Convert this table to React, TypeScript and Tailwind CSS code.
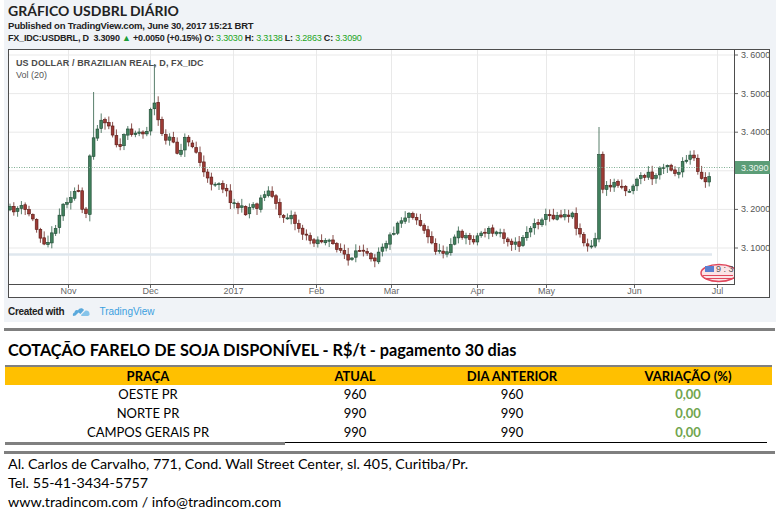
import React from 'react';

const TV = "font-['Liberation_Sans',Arial,sans-serif]";
const XL = "font-['Lato','Open_Sans',sans-serif]";

// rough path of the close, in page pixels (x, y)
const anchors: [number, number][] = [
  [10, 208], [22, 206], [30, 212], [38, 230], [45, 240], [50, 238], [56, 222], [62, 205],
  [68, 196], [74, 190], [78, 190], [82, 208], [87, 216], [90.5, 138], [96, 128], [100, 118],
  [106, 118], [112, 128], [117, 148], [122, 140], [128, 128], [134, 130], [140, 130], [146, 134],
  [149, 108], [154, 100], [158, 118], [162, 130], [166, 140], [170, 135], [176, 150], [180, 148],
  [186, 135], [190, 140], [196, 150], [202, 165], [206, 178], [212, 180], [220, 180], [226, 190],
  [232, 200], [240, 206], [246, 210], [252, 202], [258, 205], [263, 190], [268, 190], [273, 195],
  [278, 210], [284, 215], [290, 212], [296, 222], [302, 230], [308, 238], [314, 238], [320, 238],
  [326, 240], [332, 242], [338, 245], [344, 252], [350, 262], [356, 252], [362, 244], [368, 250],
  [374, 258], [380, 245], [386, 240], [392, 232], [398, 220], [404, 215], [410, 210], [416, 216],
  [422, 225], [428, 236], [434, 245], [440, 252], [446, 248], [452, 240], [458, 232], [464, 233],
  [470, 238], [476, 236], [482, 230], [488, 228], [494, 232], [500, 230], [506, 236], [512, 240],
  [518, 245], [524, 232], [530, 226], [536, 222], [542, 215], [548, 215], [554, 214], [560, 212],
  [566, 212], [572, 212], [578, 228], [584, 240], [589, 248], [595.6, 238], [598, 142], [602, 185],
  [606, 187], [612, 182], [618, 180], [624, 186], [630, 190], [636, 176], [642, 175], [648, 172],
  [654, 178], [660, 165], [666, 160], [672, 168], [678, 172], [684, 160], [690, 155], [695, 158],
  [699, 178], [704, 178], [708, 180], [712, 166],
];

function interp(x: number) {
  for (let i = 1; i < anchors.length; i++) {
    const [x1, y1] = anchors[i];
    const [x0, y0] = anchors[i - 1];
    if (x <= x1) return y0 + ((x - x0) / (x1 - x0)) * (y1 - y0);
  }
  return anchors[anchors.length - 1][1];
}

type Candle = { x: number; o: number; c: number; h: number; l: number };

// long wicks seen in the picture, keyed by bar index
const spikes: Record<number, number> = { 22: 90, 38: 62, 155: 125 };

function buildCandles(): Candle[] {
  let seed = 11;
  const rnd = () => {
    seed = (seed * 16807) % 2147483647;
    return seed / 2147483647;
  };
  const out: Candle[] = [];
  let prev = interp(10);
  for (let i = 0; 10 + i * 3.8 <= 712.5; i++) {
    const x = 10 + i * 3.8;
    const c = interp(x) + (rnd() - 0.5) * 7;
    const o = prev + (rnd() - 0.5) * 2;
    let h = Math.min(o, c) - rnd() * 6 - 1;
    const l = Math.max(o, c) + rnd() * 6 + 1;
    if (spikes[i]) h = spikes[i];
    out.push({ x, o, c, h, l });
    prev = c;
  }
  return out;
}

const priceY = (p: number) => 53 + (3.6 - p) * 386;

const months: [string, number][] = [
  ['Nov', 68], ['Dec', 150], ['2017', 233], ['Feb', 316], ['Mar', 391],
  ['Apr', 477], ['May', 546], ['Jun', 634], ['Jul', 717],
];

function Chart() {
  const candles = buildCandles();
  const levels = [3.6, 3.5, 3.4, 3.3, 3.2, 3.1];
  return (
    <svg width={762} height={249} viewBox="8 47 762 249" className="block">
      <rect x={8.5} y={47.5} width={761} height={248} fill="#fff" stroke="#4d4d4d" />
      {levels.map((p) => (
        <line key={p} x1={9} x2={734} y1={priceY(p)} y2={priceY(p)} stroke="#e9e9e9" />
      ))}
      {months.map(([m, x]) => (
        <line key={m} x1={x + 0.5} x2={x + 0.5} y1={48} y2={282} stroke="#e9e9e9" />
      ))}
      <line x1={9} x2={712} y1={252.5} y2={252.5} stroke="#dfe7ee" strokeWidth={2.5} />

      {candles.map((k, i) => {
        const up = k.c < k.o;
        const top = Math.min(k.o, k.c);
        const hgt = Math.max(Math.abs(k.o - k.c), 1);
        return (
          <g key={i}>
            <line x1={k.x} x2={k.x} y1={k.h} y2={k.l} stroke={up ? '#2d5d45' : '#6b2420'} strokeWidth={0.8} />
            <rect
              x={k.x - 1.4}
              y={top}
              width={2.8}
              height={hgt}
              fill={up ? '#41805d' : '#9c3a35'}
              stroke={up ? '#1d4631' : '#561712'}
              strokeWidth={0.6}
            />
          </g>
        );
      })}

      <line x1={9} x2={734} y1={165.5} y2={165.5} stroke="#7fae92" strokeDasharray="1 1.5" />

      <line x1={734.5} x2={734.5} y1={48} y2={282} stroke="#4d4d4d" />
      <line x1={9} x2={735} y1={282.5} y2={282.5} stroke="#4d4d4d" />

      {levels.filter((p) => p !== 3.3).map((p) => (
        <g key={p}>
          <line x1={735} x2={738} y1={priceY(p)} y2={priceY(p)} stroke="#666" />
          <text x={741} y={priceY(p) + 3} fontSize={9} fill="#555" className={TV}>
            {p.toFixed(4).replace('.', '.\u2009')}
          </text>
        </g>
      ))}
      <rect x={735} y={159} width={35} height={13} fill="#5c9d77" />
      <text x={741} y={168.5} fontSize={9} fill="#eaf5ee" className={TV}>
        3.3090
      </text>

      {months.map(([m, x]) => (
        <g key={m}>
          <line x1={x + 0.5} x2={x + 0.5} y1={283} y2={286} stroke="#666" />
          <text x={x + 0.5} y={292} fontSize={9} fill="#666" textAnchor="middle" className={TV}>
            {m}
          </text>
        </g>
      ))}

      <text x={16} y={64} fontSize={9} fontWeight={700} fill="#4a4a4a" className={TV} letterSpacing={0.1}>
        US DOLLAR / BRAZILIAN REAL, D, FX_IDC
      </text>
      <text x={16} y={76} fontSize={9} fill="#555" className={TV}>
        Vol (20)
      </text>

      <g>
        <ellipse cx={719} cy={271} rx={18} ry={8.5} fill="#fbe3e6" stroke="#e0485d" strokeWidth={1.5} />
        <rect x={705} y={264} width={9} height={6} fill="#5b7fd0" />
        <path d="M703 273.5 h30 M704 276.5 h30" stroke="#e0485d" strokeWidth={1.2} />
        <text x={716} y={270} fontSize={9} fill="#555" className={TV}>
          9 : 3
        </text>
        <rect x={735} y={258} width={30} height={24} fill="#fff" />
        <line x1={734.5} x2={734.5} y1={258} y2={282} stroke="#4d4d4d" />
      </g>
    </svg>
  );
}

function TvLogo() {
  return (
    <svg width={19} height={11} viewBox="0 0 18 11" className="block">
      <path
        d="M1 10 C0 10 0 7 2 6.5 C2 4.5 4 3.5 5.5 4.5 C6.5 2 10 1.5 11.5 4 L8 8 L6 6.5 L3 9.5 Z"
        fill="#5aa9dc"
      />
      <path d="M8.5 9 L12.5 5 C14 4 17 5 17 7.5 C17.5 9 16.5 10 15 10 L9 10 Z" fill="#86c4ea" />
    </svg>
  );
}

const rows = [
  ['OESTE PR', '960', '960', '0,00'],
  ['NORTE PR', '990', '990', '0,00'],
  ['CAMPOS GERAIS PR', '990', '990', '0,00'],
];

const cols = 'grid grid-cols-[286px_128px_186px_166px]';

export default function App() {
  return (
    <div className="w-[780px] h-[517px] bg-white overflow-hidden text-[#1a1a1a]">
      <div className="ml-[4px] w-[772px] h-[322px] bg-[#f0f3f7] flex flex-col">
        <div className={`${XL} pl-[4px] pt-[2px] font-bold text-[14px] leading-[18px] text-[#222]`}>
          GRÁFICO USDBRL DIÁRIO
        </div>
        <div className={`${TV} pl-[4px] font-bold text-[9.5px] leading-[12px] text-[#222] tracking-[-0.2px]`}>
          Published on TradingView.com, June 30, 2017 15:21 BRT
        </div>
        <div className={`${TV} pl-[4px] font-bold text-[9px] leading-[12px] text-[#222] tracking-[-0.2px] whitespace-pre`}>
          FX_IDC:USDBRL, D  3.3090 <span className="text-[#1e9e3a]">▲</span> +0.0050 (+0.15%) O:
          <span className="font-normal text-[#1da51d]"> 3.3030 </span>H:
          <span className="font-normal text-[#1da51d]"> 3.3138 </span>L:
          <span className="font-normal text-[#1da51d]"> 3.2863 </span>C:
          <span className="font-normal text-[#1da51d]"> 3.3090</span>
        </div>
        <div className="ml-[4px] mt-[5px]">
          <Chart />
        </div>
        <div className="flex items-center pl-[4px] mt-[6px] gap-[8px]">
          <span className={`${TV} font-bold text-[10px] text-[#222] tracking-[-0.3px]`}>Created with</span>
          <TvLogo />
          <span className={`${TV} text-[10px] text-[#3ba0e0]`}>TradingView</span>
        </div>
      </div>

      <div className="ml-[4px] w-[771px] h-[3px] mt-[6px] bg-[#7f7f7f]" />

      <div className={`${XL} pl-[8px] mt-[9px] font-bold text-[16.3px] leading-[20px] text-black`}>
        COTAÇÃO FARELO DE SOJA DISPONÍVEL - R$/t - pagamento 30 dias
      </div>

      <div className={`${XL} ml-[5px] w-[767px] mt-[5px] text-[13px] text-black`}>
        <div className="h-[2px] bg-[#808080]" />
        <div className={`${cols} h-[18px] items-center bg-[#ffc000] font-bold`}>
          <div className="text-center">PRAÇA</div>
          <div className="text-center">ATUAL</div>
          <div className="text-center">DIA ANTERIOR</div>
          <div className="text-center">VARIAÇÃO (%)</div>
        </div>
        {rows.map((r) => (
          <div key={r[0]} className={`${cols} h-[19px] items-center`}>
            <div className="text-center">{r[0]}</div>
            <div className="text-center">{r[1]}</div>
            <div className="text-center">{r[2]}</div>
            <div className="text-center font-bold text-[#70a54e]">{r[3]}</div>
          </div>
        ))}
        <div className="flex items-start">
          <div className="w-[280px] h-[3px] bg-[#808080]" />
          <div className="w-[482px] h-[1px] bg-black" />
        </div>
      </div>

      <div className="ml-[4px] w-[771px] h-[3px] mt-[6px] bg-[#7f7f7f]" />

      <div className={`${XL} pl-[8px] text-[14.3px] leading-[19px] text-black`}>
        <div>Al. Carlos de Carvalho, 771, Cond. Wall Street Center, sl. 405, Curitiba/Pr.</div>
        <div>Tel. 55-41-3434-5757</div>
        <div>www.tradincom.com / info@tradincom.com</div>
      </div>
    </div>
  );
}
